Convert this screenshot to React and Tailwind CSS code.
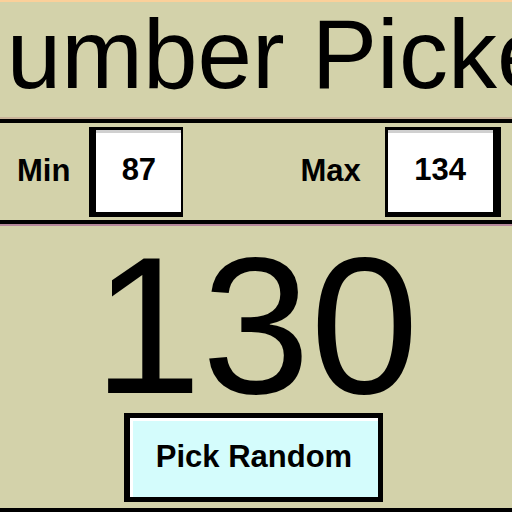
export default function App() {
  return (
    <div className="w-[512px] h-[512px] overflow-hidden bg-[#d3d2aa] flex flex-col border-t-2 border-[#fbd09a] text-black font-['Liberation_Sans',Arial,sans-serif]">
      <div className="h-[117px] flex justify-center pl-[8px] whitespace-nowrap text-[98px] leading-[104px] border-b-2 border-[#c9b49a]">
        Number Picker
      </div>

      <div className="h-[105px] flex items-center border-y-4 border-black shadow-[0_2px_0_#b4879a]">
        <span className="ml-[17px] text-[31px] font-bold">Min</span>
        <div className="ml-[19px] w-[94px] h-[90px] bg-white border-black border-l-[7px] border-t-[3px] border-r-[2px] border-b-[5px] shadow-[inset_0_3px_0_#d0d0d0] flex items-center justify-center text-[31px] font-bold">
          87
        </div>
        <span className="ml-[117px] text-[31px] font-bold">Max</span>
        <div className="ml-[24px] w-[116px] h-[90px] bg-white border-black border-r-[8px] border-t-[3px] border-l-[3px] border-b-[5px] shadow-[inset_0_3px_0_#d0d0d0] flex items-center justify-center text-[31px] font-bold">
          134
        </div>
      </div>

      <div className="h-[189px] text-center text-[195px] leading-[203px]">130</div>

      <button className="ml-[124px] w-[259px] h-[89px] shrink-0 bg-[#d4fcfc] border-black border-l-[6px] border-t-[5px] border-r-[5px] border-b-[5px] shadow-[inset_3px_3px_0_#ffffff] flex items-center justify-center text-[31px] font-bold">
        Pick Random
      </button>

      <div className="h-[6px] shrink-0" />
      <div className="h-[4px] shrink-0 bg-black" />
    </div>
  )
}
